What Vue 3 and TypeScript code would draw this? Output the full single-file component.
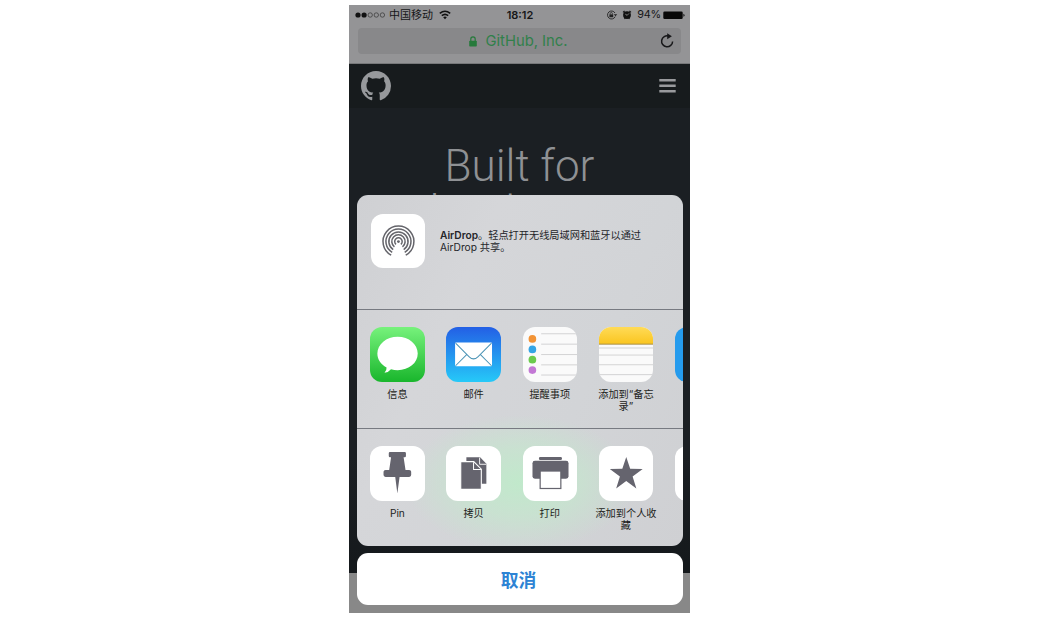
<script setup lang="ts">
interface ShareItem {
  id: string
  label: string
}

const apps: ShareItem[] = [
  { id: 'messages', label: '信息' },
  { id: 'mail', label: '邮件' },
  { id: 'reminders', label: '提醒事项' },
  { id: 'notes', label: '添加到“备忘录”' },
  { id: 'more-app', label: '' },
]

const actions: ShareItem[] = [
  { id: 'pin', label: 'Pin' },
  { id: 'copy', label: '拷贝' },
  { id: 'print', label: '打印' },
  { id: 'favorite', label: '添加到个人收藏' },
  { id: 'more-action', label: '' },
]
</script>

<template>
  <main class="stage">
    <div class="phone">
      <header class="browser">
        <div class="status">
          <div class="side">
            <svg class="signal" width="31" height="8" viewBox="0 0 31 8">
              <circle cx="3" cy="4" r="2.6" fill="#111" />
              <circle cx="9.1" cy="4" r="2.6" fill="#111" />
              <g fill="none" stroke="#333" stroke-width=".7">
                <circle cx="15.2" cy="4" r="2.2" />
                <circle cx="21.3" cy="4" r="2.2" />
                <circle cx="27.4" cy="4" r="2.2" />
              </g>
            </svg>
            <span class="carrier">中国移动</span>
            <svg class="wifi" width="12" height="10" viewBox="0 0 12 10">
              <g fill="none" stroke="#111" stroke-width="1.6">
                <path d="M.8 3.4Q6-.9 11.2 3.4" />
                <path d="M2.8 5.7Q6 3.1 9.2 5.7" />
              </g>
              <path d="M4.2 7.2Q6 5.9 7.8 7.2L6 9.2Z" fill="#111" />
            </svg>
          </div>
          <b class="time">18:12</b>
          <div class="side right">
            <svg width="12" height="10" viewBox="0 0 12 10">
              <path d="M9.2 6.6A4 4 0 1 1 9 3" fill="none" stroke="#222" stroke-width=".9" />
              <path d="M7.8 4.2h3.4L9.5 6.2Z" fill="#222" />
              <rect x="3.4" y="4.4" width="3.8" height="2.8" fill="#222" />
              <path d="M4.2 4.5V3.6a1.1 1.1 0 0 1 2.2 0v.9" fill="none" stroke="#222" stroke-width=".7" />
            </svg>
            <svg class="alarm" width="10" height="10" viewBox="0 0 10 10">
              <circle cx="5" cy="5.1" r="3.9" fill="#111" />
              <path d="M1 2.4 2.6 1M9 2.4 7.4 1M2.5 9l.8-1M7.5 9 6.7 8" stroke="#111" stroke-width="1.2" />
              <path d="M5.2 5.3 3.3 4.2M5.2 5.3 7 3.4" stroke="#999" stroke-width=".8" />
            </svg>
            <span class="percent">94%</span>
            <svg width="22" height="9" viewBox="0 0 22 9">
              <rect x=".3" y=".4" width="19.4" height="7.6" rx="1.3" fill="#080808" />
              <path d="M20.3 2.7v3q1.3-.3 1.3-1.5t-1.3-1.5Z" fill="#222" />
            </svg>
          </div>
        </div>
        <div class="address">
          <svg class="lock" width="8" height="11" viewBox="0 0 8 11">
            <rect x=".2" y="4.7" width="7.6" height="5.8" rx=".8" fill="#267a3b" />
            <path d="M1.8 5V3a2.2 2.2 0 0 1 4.4 0v2" fill="none" stroke="#267a3b" stroke-width="1.2" />
          </svg>
          <span>GitHub, Inc.</span>
          <svg class="reload" width="14" height="15" viewBox="0 0 14 15">
            <path d="M8.6 3A5.5 5.5 0 1 0 12.6 8.4" fill="none" stroke="#18181a" stroke-width="1.5" />
            <path d="M7.2.2 11.9 3.2 7.2 6.3Z" fill="#18181a" />
          </svg>
        </div>
      </header>

      <nav class="site-nav">
        <svg class="github" width="30" height="30" viewBox="0 0 16 16" fill="#97999c">
          <path d="M8 0C3.58 0 0 3.58 0 8c0 3.54 2.29 6.53 5.47 7.59.4.07.55-.17.55-.38 0-.19-.01-.82-.01-1.49-2.01.37-2.53-.49-2.69-.94-.09-.23-.48-.94-.82-1.13-.28-.15-.68-.52-.01-.53.63-.01 1.08.58 1.23.82.72 1.21 1.87.87 2.33.66.07-.52.28-.87.51-1.07-1.78-.2-3.64-.89-3.64-3.95 0-.87.31-1.59.82-2.15-.08-.2-.36-1.02.08-2.12 0 0 .67-.21 2.2.82.64-.18 1.32-.27 2-.27s1.36.09 2 .27c1.53-1.04 2.2-.82 2.2-.82.44 1.1.16 1.92.08 2.12.51.56.82 1.27.82 2.15 0 3.07-1.87 3.75-3.65 3.95.29.25.54.73.54 1.48 0 1.07-.01 1.93-.01 2.2 0 .21.15.46.55.38A8.01 8.01 0 0 0 16 8c0-4.42-3.58-8-8-8Z" />
        </svg>
        <svg width="17" height="16" viewBox="0 0 17 16">
          <path d="M.3 2.3h16.4M.3 7.8h16.4M.3 13.2h16.4" stroke="#999a9d" stroke-width="2.6" />
        </svg>
      </nav>
      <section class="hero"><h1>Built for<br />developers</h1></section>
      <div class="toolbar" />

      <div class="overlay">
        <section class="sheet">
          <div class="airdrop">
            <div class="tile">
              <svg viewBox="0 0 54 54" fill="none" stroke="#65656b" stroke-width="1.5">
                <circle cx="27.2" cy="27.3" r="1.4" fill="#65656b" stroke="none" />
                <path d="M24.8 30.1A3.7 3.7 0 1 1 29.6 30.1" />
                <path d="M23.2 32.5A6.6 6.6 0 1 1 31.2 32.5" />
                <path d="M22 35.2A9.5 9.5 0 1 1 32.4 35.2" />
                <path d="M21 38A12.4 12.4 0 1 1 33.4 38" />
                <path d="M20 40.8A15.3 15.3 0 1 1 34.4 40.8" />
              </svg>
            </div>
            <p><b>AirDrop</b>。轻点打开无线局域网和蓝牙以通过<br />AirDrop 共享。</p>
          </div>

          <div class="row">
            <div v-for="item in apps" :key="item.id" class="item">
              <div class="tile" :class="item.id">
                <svg v-if="item.id === 'messages'" viewBox="0 0 54 54">
                  <path d="M27.4 9.6c11.2 0 19.9 7.4 19.9 16.7S38.6 42.8 27.4 42.8q-3.4 0-6.6-.9-2.2 3-6.4 3.4 2.2-2 2-5.2C10.7 37.2 7.3 32 7.3 26.3c0-9.3 8.9-16.7 20.1-16.7Z" fill="#fff" />
                </svg>
                <svg v-else-if="item.id === 'mail'" viewBox="0 0 54 54">
                  <rect x="9" y="15.4" width="36.6" height="23.4" rx="1" fill="#fff" />
                  <path d="M9.5 16 23 29.5q4.3 4.2 8.6 0L45.1 16M9.5 38.4 20.7 27.2M45.1 38.4 33.9 27.2" fill="none" stroke="#4a93b5" stroke-width="1" />
                </svg>
                <svg v-else-if="item.id === 'reminders'" viewBox="0 0 54 54">
                  <path d="M18 6.7h36M18 17h36M18 27.3h36M18 37.5h36M18 47.6h36" stroke="#c9c9cb" stroke-width=".8" />
                  <circle cx="9.3" cy="11.8" r="3.8" fill="#f29335" />
                  <circle cx="9.3" cy="22.2" r="3.8" fill="#34a5e5" />
                  <circle cx="9.3" cy="32.4" r="3.8" fill="#6bcb4d" />
                  <circle cx="9.3" cy="42.7" r="3.8" fill="#c378d5" />
                </svg>
                <svg v-else-if="item.id === 'notes'" viewBox="0 0 54 54">
                  <path d="M0 0h54v17H0Z" fill="url(#noteTop)" />
                  <path d="M0 17h54" stroke="#a38c4d" stroke-width=".9" />
                  <path d="M0 20.8h54M0 27.8h54M0 37.4h54M0 47.2h54" stroke="#c9c9cb" stroke-width=".8" />
                  <defs>
                    <linearGradient id="noteTop" x2="0" y2="1">
                      <stop stop-color="#ffdb57" />
                      <stop offset="1" stop-color="#fac51f" />
                    </linearGradient>
                  </defs>
                </svg>
              </div>
              <span v-if="item.label">{{ item.label }}</span>
            </div>
          </div>

          <div class="row">
            <div v-for="item in actions" :key="item.id" class="item">
              <div class="tile">
                <svg v-if="item.id === 'pin'" viewBox="0 0 54 54" fill="#65646e">
                  <path d="M19.8 6h14.6q1.2 0 1.2 1.3v2.5q0 1.3-1.2 1.3h-1.1l1.9 12.6h3.6q2 0 2 1.8v3.3q0 1.8-2 1.8H29.3L27.1 47 25 30.6h-9.6q-2 0-2-1.8v-3.3q0-1.8 2-1.8H19l1.9-12.6h-1.1q-1.2 0-1.2-1.3V7.3q0-1.3 1.2-1.3Z" />
                </svg>
                <svg v-else-if="item.id === 'copy'" viewBox="0 0 54 54" fill="#65646e">
                  <path d="M20.2 11.2h13.6l6.2 6.5v19.8H20.2Z" />
                  <path d="M33.3 11.5v6.6h6.5" fill="none" stroke="#fff" stroke-width=".9" />
                  <path d="M14.6 15.5H27.5L35 23v20H14.6Z" stroke="#fff" stroke-width="1.1" />
                  <path d="M27.3 16v7.2h7.3" fill="none" stroke="#fff" stroke-width="1" />
                </svg>
                <svg v-else-if="item.id === 'print'" viewBox="0 0 54 54" fill="#65646e">
                  <rect x="15.8" y="11" width="22.8" height="2.8" rx="1.2" />
                  <rect x="9.4" y="14.7" width="35.7" height="17.7" rx="2.4" />
                  <rect x="17" y="24.8" width="20.5" height="17.3" fill="#fff" stroke="#65646e" stroke-width="1.2" />
                </svg>
                <svg v-else-if="item.id === 'favorite'" viewBox="0 0 54 54" fill="#65646e">
                  <path d="m27 10.8 3.9 11.8 12.4.1-10 7.4 3.7 12-10-7.3-10 7.3 3.7-12-10-7.4 12.4-.1Z" />
                </svg>
              </div>
              <span v-if="item.label">{{ item.label }}</span>
            </div>
          </div>
        </section>
        <button class="cancel" type="button">取消</button>
      </div>
    </div>
  </main>
</template>

<style>
body {
  background: #fff;
}
</style>

<style scoped>
* {
  box-sizing: border-box;
}
.stage {
  width: 1062px;
  height: 618px;
  padding: 5px 0 0 349px;
  background: #fff;
  font-family: Inter, "Noto Sans CJK SC", sans-serif;
}
.phone {
  position: relative;
  width: 341px;
  height: 608px;
  display: flex;
  flex-direction: column;
  overflow: hidden;
  background: #1b1f23;
}
svg {
  display: block;
  flex: none;
}
.browser {
  height: 59px;
  background: #949496;
  border-bottom: 1px solid #77787a;
}
.status {
  height: 20px;
  padding: 0 5px 0 6px;
  display: grid;
  grid-template-columns: 1fr auto 1fr;
  align-items: center;
  color: #161618;
  font-size: 11px;
  line-height: 20px;
}
.side {
  display: flex;
  align-items: center;
}
.right {
  justify-content: flex-end;
}
.carrier {
  margin-left: 3px;
}
.wifi {
  margin-left: 6px;
}
.time {
  font-weight: 600;
  font-size: 11px;
}
.alarm {
  margin-left: 4px;
}
.percent {
  margin: 0 2px 0 5px;
  font-size: 10.8px;
  letter-spacing: -0.2px;
}
.address {
  height: 26px;
  margin: 3px 9px 0;
  padding-right: 2px;
  display: flex;
  align-items: center;
  justify-content: center;
  gap: 8px;
  position: relative;
  border-radius: 4px;
  background: #88888a;
  color: #31804a;
  font-size: 14.8px;
  line-height: 26px;
}
.reload {
  position: absolute;
  right: 7px;
  top: 5px;
}
.site-nav {
  height: 44px;
  padding: 0 14px 0 12px;
  display: flex;
  align-items: center;
  justify-content: space-between;
  background: #171b1d;
}
.hero {
  height: 465px;
  padding-top: 35px;
  background: linear-gradient(#1b1f23 75%, #15191c 98%);
}
h1 {
  margin: 0;
  color: #8f9194;
  font: 300 44px/46px Roboto, sans-serif;
  text-align: center;
}
.toolbar {
  flex: 1;
  background: #888;
}
.overlay {
  position: absolute;
  left: 7.5px;
  right: 7.5px;
  bottom: 8px;
  display: flex;
  flex-direction: column;
  gap: 7.5px;
}
.sheet {
  height: 351px;
  overflow: hidden;
  border-radius: 11px;
  background:
    radial-gradient(ellipse 115px 68px at 50% 82%, rgba(191, 235, 202, 0.9), rgba(196, 232, 205, 0.65) 50%, transparent),
    linear-gradient(115deg, #cfd0d3, #d5d6d9 30%, #d2d4d7 65%, #cfd0d3);
}
.airdrop {
  height: 114px;
  padding: 19.3px 0 0 14px;
  display: flex;
  gap: 15px;
}
.airdrop p {
  margin: 15.7px 0 0;
  color: #242529;
  font-size: 10.2px;
  line-height: 12px;
  white-space: nowrap;
}
.airdrop b {
  font-weight: 600;
}
.tile {
  width: 54.5px;
  height: 54.5px;
  flex: none;
  overflow: hidden;
  border-radius: 12px;
  background: #fff;
}
.tile svg {
  width: 100%;
  height: 100%;
}
.row {
  height: 119px;
  padding: 17.8px 0 0 2.8px;
  display: flex;
  border-top: 1px solid #777a81;
}
.item {
  width: 76.2px;
  flex: none;
  display: flex;
  flex-direction: column;
  align-items: center;
  color: #1d1e21;
  font-size: 10.2px;
  line-height: 12px;
  text-align: center;
}
.item span {
  width: 64px;
  margin-top: 6.5px;
}
.messages {
  background: linear-gradient(#77f27c, #19b62c);
}
.mail {
  background: linear-gradient(#235fe5, #26c9f8);
}
.reminders,
.notes {
  background: #fafafa;
}
.more-app {
  background: #259bed;
}
.cancel {
  height: 52px;
  padding: 0 2px 0 0;
  border: 0;
  border-radius: 11px;
  background: #fff;
  color: #2d83d4;
  font: 700 17.8px/50px "Noto Sans CJK SC", sans-serif;
}
</style>
